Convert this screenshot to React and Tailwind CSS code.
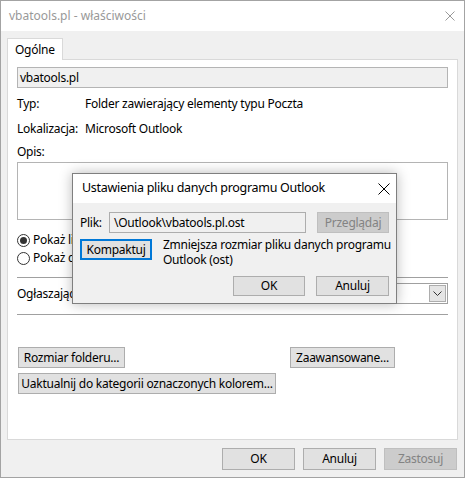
import React from 'react';

const Button = ({ children, className = '', disabled = false, focused = false }) => {
  let look = 'border border-[#adadad] bg-[#e1e1e1] text-black';
  if (disabled) look = 'border border-[#bfbfbf] bg-[#cccccc] text-[#838383]';
  if (focused) look = 'border-2 border-[#0078d7] bg-[#e1e1e1] text-black';
  return (
    <div className={`flex items-center justify-center whitespace-nowrap ${look} ${className}`}>
      {children}
    </div>
  );
};

const Radio = ({ checked, label }) => (
  <div className="flex h-[16px] items-center">
    <span className="flex h-[13px] w-[13px] items-center justify-center rounded-full border border-[#333333] bg-white">
      {checked && <span className="h-[7px] w-[7px] rounded-full bg-[#333333]" />}
    </span>
    <span className="ml-[3px] whitespace-nowrap">{label}</span>
  </div>
);

const Row = ({ label, value, className = '' }) => (
  <div className={`flex h-[16px] items-center whitespace-nowrap ${className}`}>
    <span className="w-[68px] shrink-0">{label}</span>
    <span>{value}</span>
  </div>
);

const CloseIcon = ({ size, color }) => (
  <svg width={size} height={size} viewBox={`0 0 ${size} ${size}`}>
    <path d={`M0.5 0.5L${size - 0.5} ${size - 0.5}M${size - 0.5} 0.5L0.5 ${size - 0.5}`} stroke={color} strokeWidth="1" />
  </svg>
);

// Outlook data file settings, opened over the folder properties window
const DataFileDialog = () => (
  <div className="absolute left-[71px] top-[172px] w-[325px] border border-[#7f7f7f] bg-[#f0f0f0] shadow-[0_0_12px_rgba(0,0,0,0.28)]">
    <div className="flex h-[29px] items-center justify-between bg-white pl-[9px] pr-[6px]">
      <span className="whitespace-nowrap text-[12.5px] tracking-[-0.3px]">Ustawienia pliku danych programu Outlook</span>
      <CloseIcon size={12} color="#000" />
    </div>
    <div className="px-[7px] pb-[7px] pt-[9px]">
      <div className="flex items-center">
        <span className="w-[29px] shrink-0">Plik:</span>
        <div className="flex h-[21px] w-[200px] items-center overflow-hidden whitespace-nowrap border border-[#adadad] bg-[#f0f0f0] pl-[4px]">
          \Outlook\vbatools.pl.ost
        </div>
        <Button disabled className="ml-[11px] h-[21px] w-[73px]">Przeglądaj</Button>
      </div>
      <div className="mt-[6px] flex items-start">
        <Button focused className="h-[21px] w-[72px] shrink-0">Kompaktuj</Button>
        <div className="-mt-[2px] ml-[11px] whitespace-nowrap leading-[15px]">
          Zmniejsza rozmiar pliku danych programu
          <br />
          Outlook (ost)
        </div>
      </div>
      <div className="mt-[9px] flex justify-end gap-[11px]">
        <Button className="h-[20px] w-[72px]">OK</Button>
        <Button className="h-[20px] w-[73px]">Anuluj</Button>
      </div>
    </div>
  </div>
);

export default function App() {
  return (
    <div className="relative h-[478px] w-[465px] overflow-hidden border border-[#a3a3a3] bg-[#f0f0f0] font-['Noto_Sans',sans-serif] text-[12px] tracking-[-0.25px] text-black">
      <div className="flex h-[30px] items-center justify-between bg-white pl-[8px] pr-[9px]">
        <span className="tracking-normal text-[#999999]">vbatools.pl - właściwości</span>
        <CloseIcon size={10} color="#999999" />
      </div>

      <div className="px-[6px] pt-[7px]">
        <div className="flex">
          <div className="relative z-10 -mb-px flex h-[22px] w-[56px] items-center border border-b-0 border-[#d9d9d9] bg-white pl-[7px]">
            Ogólne
          </div>
        </div>
        <div className="h-[381px] border border-[#d9d9d9] bg-white px-[9px] pt-[7px]">
          <div className="flex h-[21px] items-center border border-[#b4b4b4] bg-[#f0f0f0] pl-[2px]">vbatools.pl</div>
          <Row className="mt-[8px]" label="Typ:" value="Folder zawierający elementy typu Poczta" />
          <Row className="mt-[9px]" label="Lokalizacja:" value="Microsoft Outlook" />
          <div className="mt-[7px] h-[16px] leading-[16px]">Opis:</div>
          <div className="mt-[2px] h-[58px] border border-[#b4b4b4] bg-white" />
          <div className="mt-[12px]">
            <Radio checked label="Pokaż liczbę nieprzeczytanych elementów" />
          </div>
          <div className="mt-[2px]">
            <Radio label="Pokaż całkowitą liczbę elementów" />
          </div>
          <div className="mt-[11px] h-px bg-[#a0a0a0]" />
          <div className="mt-[5px] flex h-[21px] items-center">
            <span className="w-[186px] shrink-0 whitespace-nowrap">Ogłaszając do tego folderu, użyj:</span>
            <div className="flex h-[21px] flex-1 items-center justify-between border border-[#a0a0a0] bg-white pl-[3px] pr-[1px]">
              <span>IPM.Post</span>
              <span className="flex h-[17px] w-[17px] items-center justify-center border border-[#adadad] bg-[#e5e5e5]">
                <svg width="9" height="5" viewBox="0 0 9 5">
                  <path d="M0.5 0.5L4.5 4.5L8.5 0.5" fill="none" stroke="#333333" strokeWidth="1" />
                </svg>
              </span>
            </div>
          </div>
          <div className="mt-[10px] h-px bg-[#a0a0a0]" />
          <div className="mt-[32px] flex">
            <Button className="ml-px h-[21px] w-[107px]">Rozmiar folderu...</Button>
            <Button className="ml-[165px] h-[21px] w-[105px]">Zaawansowane...</Button>
          </div>
          <Button className="ml-px mt-[5px] h-[21px] w-[258px]">Uaktualnij do kategorii oznaczonych kolorem...</Button>
        </div>
      </div>

      <div className="mt-[8px] flex justify-end gap-[8px] pr-[7px]">
        <Button className="h-[22px] w-[73px]">OK</Button>
        <Button className="h-[22px] w-[73px]">Anuluj</Button>
        <Button disabled className="h-[22px] w-[73px]">Zastosuj</Button>
      </div>

      <DataFileDialog />
    </div>
  );
}
